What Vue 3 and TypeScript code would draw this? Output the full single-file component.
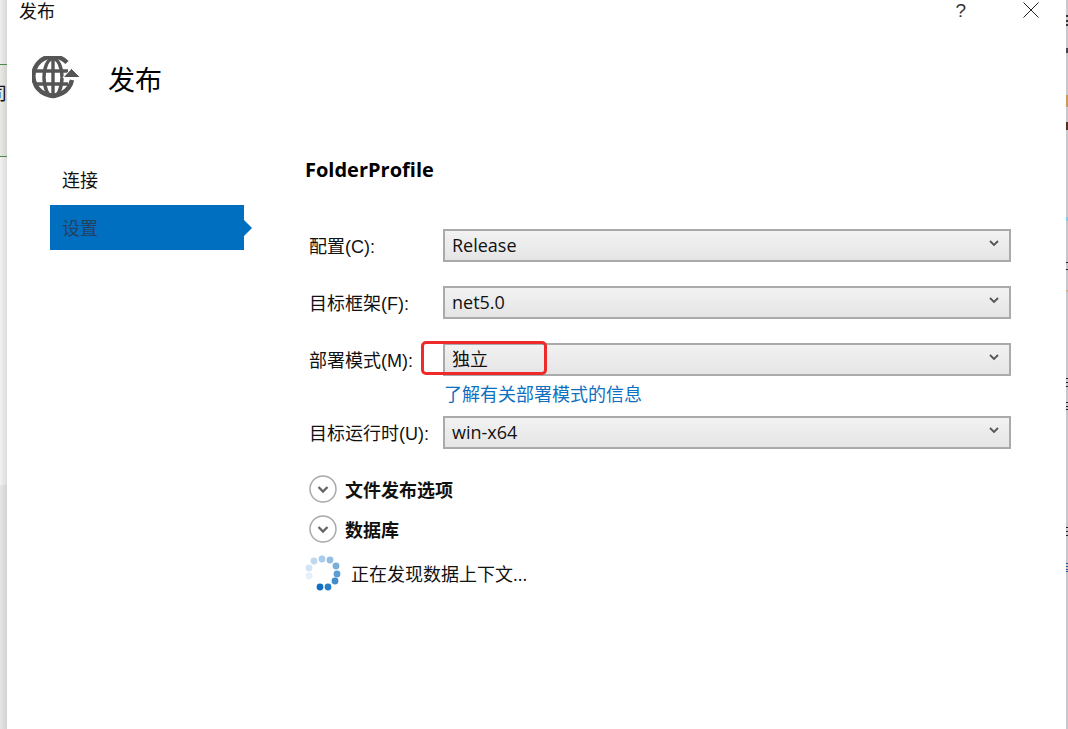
<template>
  <div class="screen">
    <aside class="behind">
      <div class="behind-top"></div>
      <div class="behind-table"><span class="behind-text">司</span></div>
      <div class="behind-mid"></div>
      <div class="behind-bottom"></div>
    </aside>

    <main class="dialog">
      <header class="titlebar">
        <span class="title">发布</span>
        <span class="help">?</span>
        <svg class="close" width="16" height="16" viewBox="0 0 16 16">
          <path d="M0.5 0.5 15.5 15.5M15.5 0.5 0.5 15.5" stroke="#222" stroke-width="1" fill="none" />
        </svg>
      </header>

      <div class="heading">
        <svg class="globe" width="50" height="44" viewBox="0 0 50 44">
          <g fill="none" stroke="#555">
            <path d="M35 6.5A19.5 19.5 0 1 0 40 24" stroke-width="4.4" />
            <ellipse cx="21" cy="21.5" rx="9" ry="19" stroke-width="3.4" />
            <path d="M3 15H36M3 28H36M21 3V40" stroke-width="3.4" />
          </g>
          <path d="M31 21.5 39.5 12.5 48.5 21.5Z" fill="#555" stroke="#fff" stroke-width="1" />
        </svg>
        <h1>发布</h1>
      </div>

      <div class="body">
        <nav class="nav">
          <div class="nav-item">连接</div>
          <div class="nav-item active">设置</div>
        </nav>

        <section class="form">
          <h2>FolderProfile</h2>

          <div class="rows">
            <template v-for="row in rows" :key="row.label">
              <div class="row">
                <label>{{ row.label }}</label>
                <div class="select">
                  <span>{{ row.value }}</span>
                  <svg width="10" height="7" viewBox="0 0 10 7">
                    <path d="M1 1 5 5 9 1" stroke="#555" stroke-width="1.8" fill="none" />
                  </svg>
                  <div v-if="row.marked" class="marker"></div>
                </div>
              </div>
              <a v-if="row.marked" class="learn">了解有关部署模式的信息</a>
            </template>
          </div>

          <div class="expander first">
            <svg width="28" height="28" viewBox="0 0 28 28">
              <circle cx="14" cy="14" r="13" fill="#fff" stroke="#aaa" stroke-width="1.5" />
              <path d="M9.5 12 14 16.5 18.5 12" stroke="#666" stroke-width="2.4" fill="none" />
            </svg>
            <span>文件发布选项</span>
          </div>
          <div class="expander second">
            <svg width="28" height="28" viewBox="0 0 28 28">
              <circle cx="14" cy="14" r="13" fill="#fff" stroke="#aaa" stroke-width="1.5" />
              <path d="M9.5 12 14 16.5 18.5 12" stroke="#666" stroke-width="2.4" fill="none" />
            </svg>
            <span>数据库</span>
          </div>

          <div class="loading">
            <svg width="38" height="38" viewBox="0 0 38 38">
              <circle v-for="d in dots" :key="d.c" :cx="d.x" :cy="d.y" r="3.4" :fill="d.c" />
            </svg>
            <span>正在发现数据上下文...</span>
          </div>
        </section>
      </div>
    </main>

    <aside class="edge">
      <i
        v-for="m in edgeMarks"
        :key="m.top"
        class="edge-mark"
        :style="{ top: m.top + 'px', height: m.h + 'px', background: m.c }"
      ></i>
    </aside>
  </div>
</template>

<script setup lang="ts">
interface Row {
  label: string
  value: string
  marked?: boolean
}

const rows: Row[] = [
  { label: '配置(C):', value: 'Release' },
  { label: '目标框架(F):', value: 'net5.0' },
  { label: '部署模式(M):', value: '独立', marked: true },
  { label: '目标运行时(U):', value: 'win-x64' },
]

// spinner dots, fading clockwise from the bottom
const dots = [
  { x: 15, y: 33, c: '#0f6fc0' },
  { x: 23, y: 33, c: '#2a7ec6' },
  { x: 30, y: 27, c: '#408ccd' },
  { x: 32, y: 20, c: '#5c9dd5' },
  { x: 31, y: 12, c: '#78aedc' },
  { x: 25, y: 6, c: '#92bee3' },
  { x: 17, y: 5, c: '#a9cceb' },
  { x: 9, y: 7, c: '#bdd8ef' },
  { x: 4, y: 14, c: '#d3e4f4' },
  { x: 4, y: 22, c: '#e6f0f8' },
]

// bits of the window behind that show past the dialog's right edge
const edgeMarks = [
  { top: 15, h: 2, c: '#333' },
  { top: 20, h: 2, c: '#333' },
  { top: 24, h: 2, c: '#333' },
  { top: 48, h: 5, c: '#445' },
  { top: 95, h: 12, c: '#c89a5a' },
  { top: 122, h: 8, c: '#5a3020' },
  { top: 217, h: 4, c: '#7cc8f0' },
  { top: 262, h: 1, c: '#222' },
  { top: 269, h: 1, c: '#222' },
  { top: 290, h: 2, c: '#c8b090' },
  { top: 378, h: 1, c: '#222' },
  { top: 382, h: 1, c: '#222' },
  { top: 386, h: 1, c: '#222' },
  { top: 402, h: 1, c: '#222' },
  { top: 406, h: 1, c: '#222' },
  { top: 409, h: 1, c: '#222' },
  { top: 527, h: 1, c: '#222' },
  { top: 531, h: 1, c: '#222' },
  { top: 535, h: 1, c: '#222' },
  { top: 563, h: 1, c: '#2a50b0' },
  { top: 566, h: 1, c: '#2a50b0' },
  { top: 569, h: 1, c: '#2a50b0' },
  { top: 571, h: 1, c: '#2a50b0' },
]
</script>

<style>
html,
body {
  margin: 0;
  background: #fff;
  overflow: hidden;
}
</style>

<style scoped>
.screen {
  display: flex;
  width: 1068px;
  height: 729px;
  overflow: hidden;
  background: #fff;
  color: #111;
  font-family: "Open Sans", "Noto Sans CJK SC", sans-serif;
  font-size: 18px;
}

.behind {
  width: 7px;
  flex: none;
  display: flex;
  flex-direction: column;
}

.behind-top {
  height: 64px;
  background: linear-gradient(90deg, #ededed, #d8d8d8);
}

.behind-table {
  height: 91px;
  background: linear-gradient(90deg, #e9e9e6, #d2d2ce);
  border-top: 1px solid #4c8a4c;
  border-bottom: 1px solid #4c8a4c;
  overflow: hidden;
  position: relative;
}

.behind-text {
  position: absolute;
  right: 0;
  top: 19px;
  font-size: 18px;
  line-height: 18px;
}

.behind-mid {
  height: 328px;
  background: linear-gradient(90deg, #f2f2f2, #dcdcdc);
}

.behind-bottom {
  flex: 1;
  background: linear-gradient(90deg, #e6e6e6, #d2d2d2);
}

.edge {
  width: 2px;
  flex: none;
  background: #c8c8cc;
  position: relative;
}

.edge-mark {
  position: absolute;
  left: 0;
  width: 2px;
}

.dialog {
  flex: 1;
  min-width: 0;
  display: flex;
  flex-direction: column;
}

.titlebar {
  display: flex;
  align-items: center;
  height: 22px;
  padding: 0 27px 0 12px;
}

.title {
  flex: 1;
  line-height: 22px;
}

.help {
  font-family: "Liberation Sans", sans-serif;
  font-size: 19px;
  color: #333;
  margin-right: 57px;
}

.close {
  margin-top: -2px;
}

.heading {
  display: flex;
  align-items: center;
  height: 68px;
  margin-top: 22px;
  padding-left: 25px;
  box-sizing: border-box;
}

.globe {
  flex: none;
}

.heading h1 {
  margin: 0 0 0 26px;
  font-size: 27px;
  font-weight: 400;
  color: #000;
}

.body {
  display: flex;
  padding-left: 43px;
}

.nav {
  width: 194px;
  flex: none;
  margin-top: 46px;
}

.nav-item {
  height: 45px;
  line-height: 45px;
  padding-left: 12px;
  position: relative;
}

.nav-item.active {
  background: #006fc0;
  color: #24425f;
  margin-top: 2px;
  line-height: 47px;
}

.nav-item.active::after {
  content: "";
  position: absolute;
  left: 100%;
  top: 15px;
  border-left: 8px solid #006fc0;
  border-top: 8px solid transparent;
  border-bottom: 8px solid transparent;
}

.form {
  margin-left: 61px;
  flex: 1;
}

.form h2 {
  margin: 42px 0 0;
  height: 32px;
  font-size: 20px;
  line-height: 32px;
  font-weight: 700;
  color: #000;
}

.rows {
  margin-top: 43px;
  display: flex;
  flex-direction: column;
}

.row {
  display: flex;
  align-items: center;
  height: 33px;
  margin-bottom: 24px;
  padding-left: 4px;
}

.row label {
  width: 134px;
  flex: none;
  white-space: nowrap;
  margin-top: -2px;
  font-family: "Liberation Sans", "Noto Sans CJK SC", sans-serif;
}

.select {
  position: relative;
  width: 568px;
  height: 33px;
  box-sizing: border-box;
  border: 2px solid #aaa;
  background: linear-gradient(#f2f2f2, #e5e5e5);
  display: flex;
  align-items: center;
  justify-content: space-between;
  padding: 0 10px 0 7px;
  line-height: 29px;
}

.select svg {
  margin-top: -5px;
}

.marker {
  position: absolute;
  left: -24px;
  top: -4px;
  width: 126px;
  height: 34px;
  box-sizing: border-box;
  border: 3px solid #ee2a2a;
  border-radius: 5px;
}

.learn {
  display: block;
  margin: -24px 0 8px 139px;
  height: 32px;
  line-height: 36px;
  color: #0e70c0;
}

.expander {
  display: flex;
  align-items: center;
  gap: 8px;
  padding-left: 4px;
  height: 28px;
  font-weight: 700;
}

.expander.first {
  margin-top: 2px;
}

.expander.second {
  margin-top: 12px;
}

.loading {
  display: flex;
  align-items: center;
  gap: 8px;
  margin-top: 11px;
  height: 38px;
}
</style>
